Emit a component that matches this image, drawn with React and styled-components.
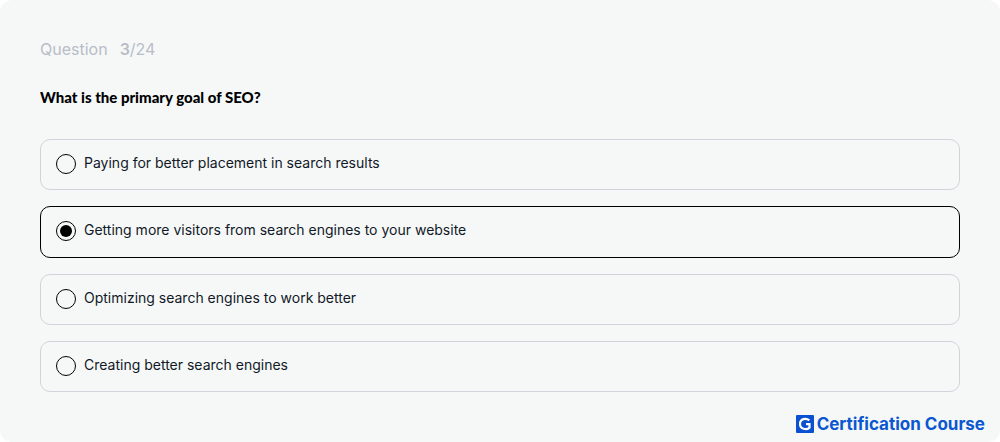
import React, { useState } from 'react'
import styled, { createGlobalStyle } from 'styled-components'

const options = [
  'Paying for better placement in search results',
  'Getting more visitors from search engines to your website',
  'Optimizing search engines to work better',
  'Creating better search engines',
]

const App = () => {
  const [selected, setSelected] = useState(1)

  return (
    <>
      <GlobalStyle />
      <Card>
        <Progress>
          Question <Count><b>3</b>/24</Count>
        </Progress>
        <Fieldset>
          <Title>What is the primary goal of SEO?</Title>
          <Options>
            {options.map((text, i) => (
              <Option key={text} $active={selected === i}>
                <Radio
                  type="radio"
                  name="answer"
                  checked={selected === i}
                  onChange={() => setSelected(i)}
                />
                <Answer>{text}</Answer>
              </Option>
            ))}
          </Options>
        </Fieldset>
        <Brand>
          <Logo viewBox="0 0 18 18" aria-hidden="true">
            <rect width="18" height="18" rx="1" fill="#0b50d0" />
            <path
              d="M13.3 5.3C10.2 2.6 4 3.6 4 9C4 14.2 10.6 15.4 13.5 12.6V9.2H10"
              fill="none"
              stroke="#fff"
              strokeWidth="2.2"
            />
          </Logo>
          Certification Course
        </Brand>
      </Card>
    </>
  )
}

const GlobalStyle = createGlobalStyle`
  * {
    box-sizing: border-box;
  }
  body {
    margin: 0;
    background: #fff;
    font-family: Inter, "Liberation Sans", sans-serif;
  }
`

const Card = styled.main`
  padding: 39px 40px 6px;
  border-radius: 12px;
  background: #f6f8f8;
`

const Progress = styled.div`
  display: flex;
  gap: 12px;
  font-size: 16px;
  line-height: 20px;
  color: #b8bdc7;
`

const Count = styled.span`
  b {
    font-weight: 600;
  }
`

const Fieldset = styled.fieldset`
  margin: 0;
  padding: 0;
  border: 0;
`

const Title = styled.legend`
  padding: 28px 0 0;
  font-family: Lato, "Liberation Sans", sans-serif;
  font-size: 15px;
  font-weight: 900;
  line-height: 20px;
  color: #000;
`

const Options = styled.div`
  display: grid;
  gap: 16px;
  padding-top: 32px;
`

const Option = styled.label`
  display: flex;
  align-items: center;
  gap: 8px;
  min-height: ${({ $active }) => ($active ? '52px' : '51px')};
  padding: 0 15px 2px;
  border: 1px solid ${({ $active }) => ($active ? '#000' : '#d0d3da')};
  border-radius: 10px;
  font-size: 14px;
  line-height: 20px;
  color: #111827;
  cursor: pointer;
`

const Answer = styled.span`
  padding-bottom: 2px;
`

const Radio = styled.input`
  appearance: none;
  display: grid;
  place-items: center;
  flex: none;
  width: 20px;
  height: 20px;
  margin: 0;
  border: 1px solid #000;
  border-radius: 50%;

  &:checked::before {
    content: '';
    width: 12px;
    height: 12px;
    border-radius: 50%;
    background: #000;
  }
`

const Brand = styled.div`
  display: flex;
  align-items: center;
  justify-content: flex-end;
  gap: 3px;
  margin: 20px -25px 0 0;
  font-size: 17px;
  font-weight: 700;
  line-height: 24px;
  color: #0b57d0;
`

const Logo = styled.svg`
  width: 18px;
  height: 18px;
`

export default App
